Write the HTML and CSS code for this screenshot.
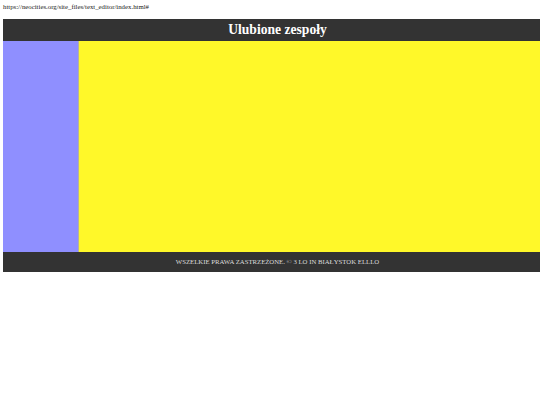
FILE: index.html
```html
<!DOCTYPE html>
<html lang="pl">
<head>
<meta charset="utf-8">
<title>Ulubione zespoły</title>
<link rel="stylesheet" href="styles.css">
</head>
<body>
<div class="url">https://neocities.org/site_files/text_editor/index.html#</div>
<div class="page">
  <header class="top">Ulubione zespoły</header>
  <div class="main">
    <nav class="side"></nav>
    <section class="content"></section>
  </div>
  <footer class="bottom">WSZELKIE PRAWA ZASTRZEŻONE. © 3 LO IN BIAŁYSTOK ELLLO</footer>
</div>
</body>
</html>
```
FILE: styles.css
```css
html, body {
  margin: 0;
  padding: 0;
  background: #ffffff;
  overflow: hidden;
  font-family: "Liberation Serif", "Times New Roman", serif;
}
.url {
  font-size: 6.8px;
  line-height: 8px;
  color: #222;
  padding: 3px 0 0 3px;
  height: 19px;
  box-sizing: border-box;
}
.page {
  margin-left: 3px;
  width: 549px;
}
.top {
  background: #333333;
  color: #ffffff;
  height: 22px;
  line-height: 22px;
  text-align: center;
  font-weight: bold;
  font-size: 13.6px;
}
.main {
  display: flex;
  height: 211px;
}
.side {
  width: 75px;
  background: #8f8fff;
  border-right: 1px solid #b5b0a0;
}
.content {
  flex: 1;
  background: #fff829;
}
.bottom {
  background: #333333;
  color: #dddddd;
  height: 20px;
  line-height: 20px;
  text-align: center;
  font-size: 6.75px;
}
```
